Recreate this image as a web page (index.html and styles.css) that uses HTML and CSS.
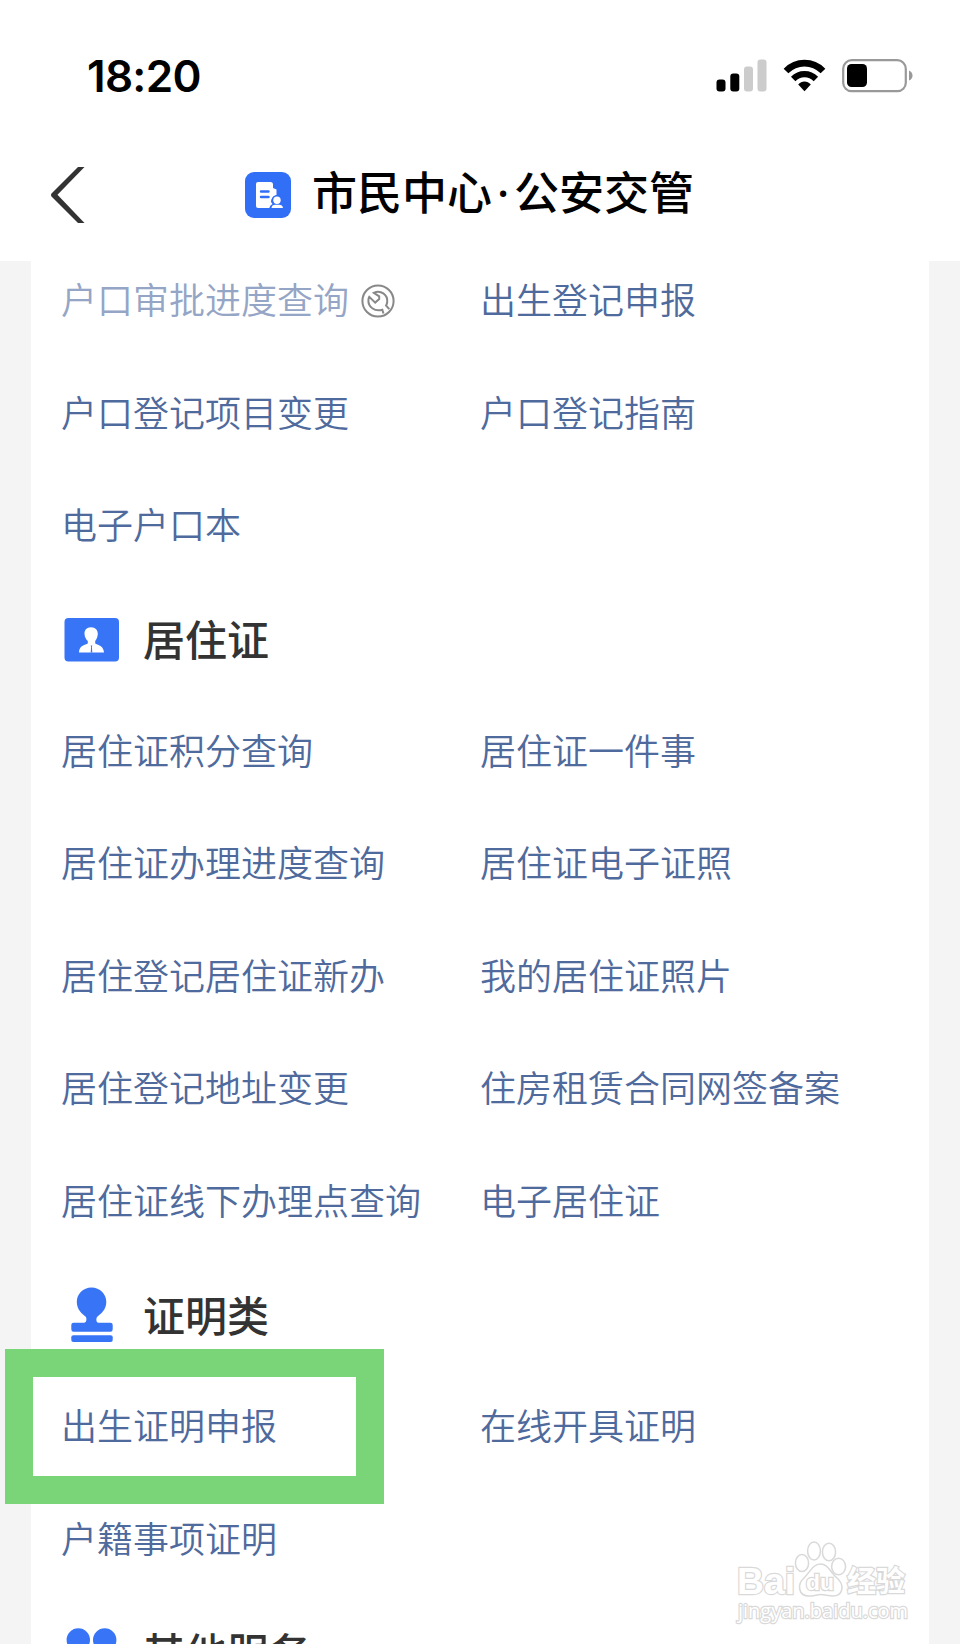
FILE: index.html
```
<!DOCTYPE html>
<html lang="zh-CN">
<head>
  <meta charset="UTF-8">
  <title>市民中心·公安交管</title>
  <link rel="stylesheet" href="styles.css">
</head>
<body>

  <div class="status-bar">
    <span class="time">18:20</span>
    <div class="status-icons">
      <svg class="signal" width="52" height="34" viewBox="0 0 52 34">
        <rect x="0.5" y="20.5" width="9" height="12" rx="3"/>
        <rect x="14.3" y="14.5" width="9" height="18" rx="3"/>
        <rect x="28" y="7.5" width="9" height="25" rx="3" fill="#ccc"/>
        <rect x="41.5" y="0.5" width="9" height="32" rx="3" fill="#ccc"/>
      </svg>
      <svg class="wifi" width="44" height="34" viewBox="0 0 44 34">
        <path d="M3 12 C13.5 1.5 29.5 1.5 40 12" fill="none" stroke="#000" stroke-width="6.6"/>
        <path d="M10.2 20 C16.5 13.6 26.5 13.6 32.9 20" fill="none" stroke="#000" stroke-width="6.2"/>
        <path d="M15.2 25.5 C18.5 21.5 24.5 21.5 27.8 25.5 L21.5 32.3 Z"/>
      </svg>
      <svg class="battery" width="72" height="34" viewBox="0 0 72 34">
        <rect x="1.2" y="1.2" width="62.6" height="31" rx="8.5" fill="#fff" stroke="#999" stroke-width="2.2"/>
        <rect x="5" y="5" width="20" height="23" rx="4.5"/>
        <path d="M67 11.5 Q70.5 13 70.5 16.5 Q70.5 20 67 21.5 Z" fill="#999"/>
      </svg>
    </div>
  </div>

  <div class="nav-bar">
    <svg class="back" width="34" height="56" viewBox="0 0 34 56">
      <path d="M27 0 H33.5 L6.5 27.8 L33.5 56 H27 L0.5 29.5 Q-0.5 28 0.5 26.5 Z" fill="#333"/>
    </svg>
    <div class="nav-title">
      <svg class="app-icon" width="46" height="46" viewBox="0 0 46 46">
        <rect width="46" height="46" rx="9" fill="#316ff6"/>
        <path d="M13 10 H25.5 Q28 10 28 12.5 V16 L31.5 17.5 V23 Q26 25 26 30 L27.5 32 Q25 33 24.3 36 H13 Q11 36 11 34 V12 Q11 10 13 10 Z" fill="#fff"/>
        <path d="M16 19.5 H23.5 M16 25 H23.5" stroke="#316ff6" stroke-width="2.4" stroke-linecap="round"/>
        <circle cx="32" cy="28.3" r="5.3" fill="#316ff6"/>
        <circle cx="32" cy="28.3" r="3.7" fill="#fff"/>
        <path d="M26.5 36 Q27 32.8 30 32.8 H34 Q37.5 32.8 38 36 Z" fill="#fff"/>
      </svg>
      <h1>市民中心<span class="dot">·</span>公安交管</h1>
    </div>
  </div>

  <div class="page">
    <div class="panel">
      <div class="links">
        <a class="disabled">户口审批进度查询
          <svg class="repair" width="34" height="34" viewBox="0 0 34 34" fill="none" stroke="#888" stroke-width="2">
            <circle cx="17" cy="17" r="15.6"/>
            <path d="M22.5 29.5 L21.3 25.8 C13.5 28 7 22.8 7.4 16 Q7.5 14.3 8.3 12.8 L14.2 18.6 L18.2 15 L18.2 12.4 L12.8 8.8 C19.5 5.5 27 10.5 26.2 18.2 Q26 20 25.1 21.6 L28.3 25.2"/>
          </svg>
        </a>
        <a>出生登记申报</a>
        <a>户口登记项目变更</a>
        <a>户口登记指南</a>
        <a>电子户口本</a>
      </div>

      <h2>
        <svg class="sec-icon" width="56" height="56" viewBox="0 0 56 56">
          <rect x="0.5" y="6" width="54.5" height="43.5" rx="4" fill="#3875f6"/>
          <path d="M27 15.2 C31.5 15.2 34 18.3 33.8 22 C33.6 25.5 32 28 31.2 29 V31.5 C35 33.5 39.5 34 40 40.5 H15 C15.2 34 19.5 33.5 23.8 31.5 V29 C22 27.5 20.7 25 20.5 22 C20.3 18.3 22.5 15.2 27 15.2 Z" fill="#fff"/>
          <path d="M26.7 33.5 H28.3 L27.9 35 L28.3 40.5 H26.7 L27.1 35 Z" fill="#3875f6"/>
        </svg>
        居住证
      </h2>
      <div class="links">
        <a>居住证积分查询</a>
        <a>居住证一件事</a>
        <a>居住证办理进度查询</a>
        <a>居住证电子证照</a>
        <a>居住登记居住证新办</a>
        <a>我的居住证照片</a>
        <a>居住登记地址变更</a>
        <a>住房租赁合同网签备案</a>
        <a>居住证线下办理点查询</a>
        <a>电子居住证</a>
      </div>

      <h2>
        <svg class="sec-icon" width="56" height="56" viewBox="0 0 56 56" fill="#3875f6">
          <path d="M27.5 0.5 C36 0.5 42.3 7 42.3 15 C42.3 23 36.5 27 33.5 29.5 C31.8 31 32 35.7 34.5 35.7 H46.5 Q48.7 35.7 48.7 38 V42.3 Q48.7 44.8 46.5 44.8 H9.5 Q7.3 44.8 7.3 42.3 V38 Q7.3 35.7 9.5 35.7 H20 C22.8 35.7 23 31 21.5 29.5 C18.5 27 12.8 23 12.8 15 C12.8 7 19 0.5 27.5 0.5 Z"/>
          <rect x="7.3" y="48.3" width="41.4" height="6.7" rx="2"/>
        </svg>
        证明类
      </h2>
      <div class="links">
        <a class="marked">出生证明申报</a>
        <a>在线开具证明</a>
        <a>户籍事项证明</a>
      </div>

      <h2>
        <svg class="sec-icon" width="56" height="56" viewBox="0 0 56 56" fill="#3875f6">
          <circle cx="14.3" cy="15" r="11.7"/>
          <circle cx="40.7" cy="15" r="11.7"/>
          <circle cx="14.3" cy="41" r="11.7"/>
          <circle cx="40.7" cy="41" r="11.7"/>
        </svg>
        其他服务
      </h2>
    </div>
  </div>

  <svg class="watermark" width="180" height="90" viewBox="0 0 180 90">
    <g fill="#fff" stroke="#d9d9d9" stroke-width="1.5">
      <ellipse cx="71" cy="23" rx="6.6" ry="8.5"/>
      <ellipse cx="83" cy="11" rx="6.4" ry="9"/>
      <ellipse cx="98" cy="12" rx="6.6" ry="8.8"/>
      <ellipse cx="107.6" cy="26.5" rx="7" ry="8.3"/>
      <path d="M89.5 24 C97 24 99 32 106 38 C114 45 112 56 102 56 C97 56 94 54.5 89.5 54.5 C86 54.5 83 56 78 56 C67 56 66 44 73 38 C79 32 82 24 89.5 24 Z"/>
    </g>
    <g class="wm-text">
      <text x="6" y="54" font-size="37" textLength="58" lengthAdjust="spacingAndGlyphs">Bai</text>
      <text x="75" y="50" font-size="22" textLength="28" lengthAdjust="spacingAndGlyphs">du</text>
      <text class="cjk" x="116" y="52" font-size="29" textLength="58">经验</text>
      <text class="url" x="7" y="78" font-size="20" textLength="170" lengthAdjust="spacingAndGlyphs">jingyan.baidu.com</text>
    </g>
  </svg>

</body>
</html>
```
FILE: styles.css
```
body {
  margin: 0;
  height: 1644px;
  position: relative;
  overflow: hidden;
  background: #fff;
  font-family: "Noto Sans CJK SC", sans-serif;
}

svg {
  display: block;
  flex: none;
}

.status-bar {
  height: 96px;
  padding: 54px 46px 0 87px;
  display: flex;
  justify-content: space-between;
  box-sizing: border-box;
}

.time {
  font-family: Inter, sans-serif;
  font-size: 44px;
  font-weight: 600;
  line-height: 44px;
  letter-spacing: -0.7px;
}

.status-icons {
  display: flex;
  padding-top: 5px;
}

.wifi {
  margin: 0 15px;
}

.nav-bar {
  height: 165px;
  display: flex;
  box-sizing: border-box;
  padding: 71px 0 0 51px;
}

.nav-title {
  display: flex;
  margin: 5px 0 0 160px;
}

h1 {
  margin: -9px 0 0 21px;
  font-size: 45px;
  font-weight: 500;
  line-height: 56px;
  white-space: nowrap;
}

.dot {
  display: inline-block;
  width: 22px;
  font-family: "Noto Sans", sans-serif;
  line-height: 1;
  text-align: center;
}

.page {
  height: 1383px;
  padding: 0 31px;
  background: #f4f4f4;
  overflow: hidden;
}

.panel {
  background: #fff;
  margin-top: -19px;
  padding: 0 0 100px 30px;
}

.links {
  display: grid;
  grid-template-columns: 419px 1fr;
  grid-auto-rows: 112.6px;
}

.links a {
  display: flex;
  align-items: center;
  color: #4f6a9c;
  font-size: 36px;
  font-weight: 350;
  white-space: nowrap;
}

.links .disabled {
  color: #95a5c5;
}

.repair {
  margin: 5px 0 0 12px;
}

h2 {
  display: flex;
  align-items: center;
  box-sizing: border-box;
  height: 112.6px;
  margin: 0;
  padding: 3px 0 0 3px;
  color: #333;
  font-size: 42px;
  font-weight: 500;
}

.sec-icon {
  margin: 4px 23px 0 0;
}

.links .marked {
  position: relative;
}

.marked::after {
  content: "";
  position: absolute;
  left: -56px;
  top: -19px;
  width: 323px;
  height: 99px;
  border: 28px solid #7ad578;
}

.watermark {
  position: absolute;
  left: 731px;
  top: 1540px;
}

.wm-text {
  font-family: "Liberation Sans", sans-serif;
  font-weight: bold;
  fill: #fff;
  stroke: #d9d9d9;
  stroke-width: 2.4px;
  paint-order: stroke;
}

.wm-text .cjk {
  font-family: "Noto Sans CJK SC", sans-serif;
}

.wm-text .url {
  font-family: "Open Sans", sans-serif;
  font-weight: normal;
}
```
